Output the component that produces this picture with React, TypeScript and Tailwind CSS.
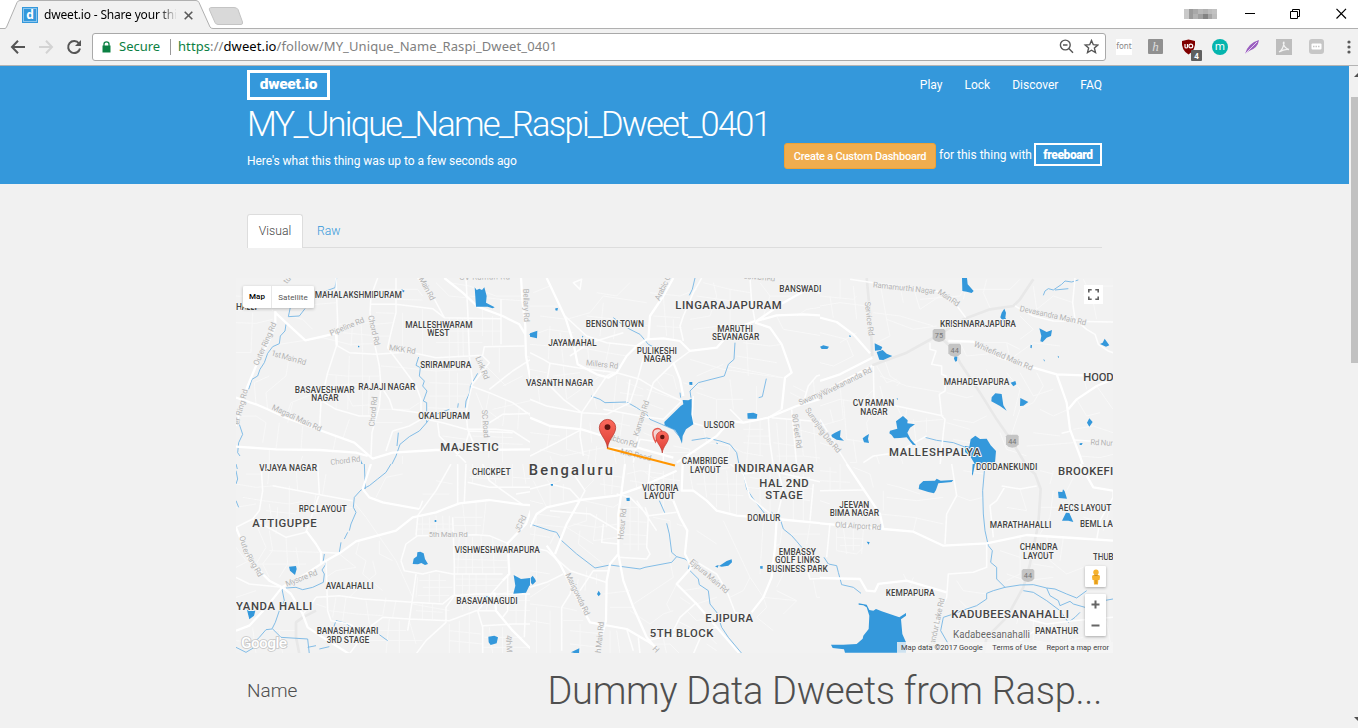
import React from "react";

type Area = [text: string, x1: number, x2: number, baseline: number, size?: number];
type Street = [text: string, x1: number, y1: number, x2: number, y2: number];
type Shield = [text: string, cx: number, cy: number];

interface Tile {
  x: number;
  y: number;
  highways?: string[];
  major: string[];
  medium: string[];
  minor: string[];
  rivers: string[];
  lakes: string[];
  streets: Street[];
  areas: Area[];
  shields?: Shield[];
}

// Tiles are drawn on a grid three times finer than the page.
const tiles: Tile[] = [
  {
    x: 236,
    y: 276,
    major: [
      "M118 105L118 150L95 205L60 270L35 330L20 372L0 450",
      "M0 365L60 385L95 400L150 425L250 462L355 500L395 535L410 548L470 530L600 522L700 522L900 520",
      "M0 512L120 520L250 522L360 530L395 540",
      "M118 110L150 140L208 193L300 172L302 208",
      "M625 6L680 50L725 92L800 120L850 145L868 175L870 240L885 320L900 350",
      "M855 6L860 80L868 150L868 175",
    ],
    medium: [
      "M425 6L405 60L402 110L415 200L430 270L435 330L430 390L408 470L405 540",
      "M300 6L302 60L305 140L302 208L340 230L420 235L520 228L600 245L740 238L745 212L865 210",
      "M302 208L275 290L255 380L250 465",
      "M480 6L480 110L465 170L455 215L500 275L540 330L555 370L555 430L520 450L470 465",
      "M405 85L480 85L590 98L625 125L795 128",
      "M545 6L590 60L625 125",
      "M690 6L695 100L700 240",
      "M705 330L760 350L830 380L900 430",
      "M700 240L710 320L700 360L690 410L695 460L720 520",
      "M570 430L620 440L690 460L780 460L830 465L900 510",
      "M745 450L800 415L900 412",
      "M605 440L610 480L650 520L690 560",
      "M435 330L460 370L470 400L550 410",
      "M795 70L795 205M740 240L760 260L705 330",
      "M660 540L690 500L700 465L830 470",
      "M250 370L300 400L370 420L420 420",
      "M470 465L450 525M900 240L830 285L760 340",
    ],
    minor: [
      "M130 205L260 185L340 205L410 203",
      "M50 110L45 230L0 230M0 140L60 142L110 130",
      "M60 50L100 70L110 105M0 60L60 62",
      "M155 100L210 100L240 85L300 80M160 120L200 130L230 160",
      "M310 145L400 140M320 170L405 178M345 210L350 140M380 230L375 140",
      "M275 295L330 300L430 300M270 330L350 325L430 330M260 360L330 350L350 390L430 385",
      "M300 300L300 400M340 240L335 400M380 235L380 420M400 300L398 415",
      "M150 425L165 380L240 350M170 380L155 440M95 400L90 350L150 300L160 240",
      "M420 110L475 112M415 145L470 140M430 180L460 180M435 270L500 275",
      "M430 40L545 40L560 60M480 70L560 72M500 110L500 220M560 100L560 235",
      "M640 125L640 240M665 125L667 240M680 125L682 240M620 165L795 165M600 200L740 200",
      "M600 20L640 60L690 65M640 20L700 30L780 60L900 60",
      "M700 60L795 70L870 75M740 100L740 180M770 120L770 208",
      "M500 275L600 285L700 280M600 260L600 420M640 245L640 400M665 290L665 380",
      "M580 320L700 325M580 360L690 360M575 395L685 400M750 270L810 330M790 215L790 290",
      "M720 350L740 400L735 460M760 350L750 400L790 430M810 370L800 450M850 390L845 460",
      "M620 480L690 490M640 500L700 505M710 480L830 485M730 500L860 505M760 460L758 545M800 465L800 560",
      "M0 420L60 420L90 440L80 500M60 385L55 320L100 300M130 440L120 520M200 450L195 522",
      "M300 480L290 530M340 430L320 490M430 400L520 400L550 380M420 440L500 440",
      "M860 300L800 330M870 240L900 250M770 400L900 370M500 540L500 570M200 540L190 570M100 520L100 570",
    ],
    rivers: [
      "M302 6L297 35L270 45L240 50",
      "M165 85L157 122L190 120L207 98",
      "M150 145L147 165L133 180L130 203L110 212L95 232L85 260L72 280L65 300L48 310L38 340",
      "M10 445L20 475L8 500L5 530L12 540",
      "M548 243L540 268L553 275L550 300L565 315L560 330L573 345L562 375L572 380L572 440L550 465L520 482L492 505L480 540L465 570",
      "M570 440L600 415L640 400M665 395L667 382M688 395L690 375L702 348L703 330L725 292",
      "M487 470L483 510",
    ],
    lakes: [
      "M716 34L722 42L730 38L738 42L745 34L752 60L750 80L776 94L770 97L755 92L720 92Z",
      "M880 175L890 168L900 165L900 188L885 182Z",
      "M497 40L506 44L503 49L496 47Z",
      "M366 209L370 210L370 214L366 214Z",
      "M375 552L382 570L377 570Z",
    ],
    streets: [
      ["Bellary Rd", 862, 38, 864, 138],
      ["Main Rd", 548, 8, 584, 75],
      ["tur", 152, 25, 172, 2],
      ["CV Raman Rd", 670, 12, 822, 10],
      ["Pipeline Rd", 285, 180, 387, 138],
      ["Chord Rd", 396, 120, 416, 210],
      ["Outer Ring Rd", 66, 270, 122, 143],
      ["1st Main Rd", 104, 238, 208, 268],
      ["MKK Rd", 458, 222, 538, 234],
      ["Link Rd", 718, 245, 745, 312],
      ["Magadi Main Rd", 106, 400, 252, 467],
      ["Chord Rd", 415, 452, 424, 362],
      ["SC Road", 737, 402, 744, 486],
      ["Chord Rd", 284, 567, 374, 556],
      ["er Ring Rd", 8, 447, 36, 342],
    ],
    areas: [
      ["MAHALAKSHMIPURAM", 236, 498, 66],
      ["HALLI", 0, 63, 103],
      ["MALLESHWARAM", 508, 710, 156],
      ["WEST", 574, 640, 180],
      ["SRIRAMPURA", 553, 706, 276],
      ["RAJAJI NAGAR", 367, 538, 342],
      ["BASAVESHWAR", 176, 356, 350],
      ["NAGAR", 226, 308, 375],
      ["OKALIPURAM", 547, 702, 430],
      ["MAJESTIC", 613, 788, 525, 34],
    ],
  },
  {
    x: 530,
    y: 276,
    major: [
      "M50 6L85 80L108 130L130 200L143 265L200 295L235 305L260 290L290 240L320 210L350 190L400 187L450 195L480 225L560 215L610 160L675 135",
      "M675 140L720 155L755 205L785 290L765 305L755 400",
      "M900 360L800 390L715 425L640 440L600 435L560 480L500 520L440 560",
      "M900 120L820 115L740 118L680 135L760 80L850 30",
      "M0 425L60 450L155 460L220 480L340 520L430 545",
      "M355 190L360 120L380 90L400 60L430 6",
      "M430 260L450 310L460 360",
    ],
    medium: [
      "M0 230L40 250L60 262L143 275L260 290L330 310L380 340L455 375",
      "M515 6L490 50L460 120L450 150L460 195",
      "M60 262L50 320L100 370L155 410L150 480L160 540",
      "M155 410L230 300L250 290M155 410L230 415L300 380L320 320L350 210",
      "M430 262L370 320L350 380L330 430L320 500L310 560",
      "M105 120L170 180L230 200L320 210",
      "M660 6L665 80L675 135M755 400L715 425L720 500L730 570",
      "M490 360L485 440L520 450M455 375L400 430L330 420L220 400",
      "M0 540L80 500L155 460M0 370L50 390L155 410",
      "M640 440L600 400M230 515L320 520L330 490L400 500L400 560",
      "M120 240L180 200L280 170M725 425L900 440M785 400L800 570",
      "M900 290L860 300L835 330L820 380M155 10L130 20L150 40L155 8",
      "M290 380L300 310M900 60L830 40L800 40M480 225L430 262",
    ],
    minor: [
      "M10 50L60 30M0 90L90 90M30 120L110 130L180 110L220 60L350 80",
      "M200 50L260 60L300 20M220 80L210 180M170 120L260 130L355 150M260 130L250 190",
      "M60 150L55 250M0 180L55 160L130 170M0 205L120 215M90 170L100 260",
      "M130 210L230 230L290 240M170 180L180 290M240 200L220 290",
      "M360 50L450 60L500 40M400 60L410 180M370 120L450 125M380 150L455 155M430 130L430 190",
      "M520 20L600 40L660 50M500 60L640 80M550 20L560 60L540 120L480 130M600 40L600 140M490 160L570 150M500 100L600 100",
      "M690 20L720 60L700 120M720 60L790 60M740 120L760 160L880 180M800 120L830 100L900 90",
      "M640 200L720 210L755 205M620 240L740 260M590 270L760 305M650 190L655 300",
      "M480 250L580 280L760 306M500 300L580 265M460 320L520 340M500 350L560 370L640 370M560 370L560 430M600 310L610 400M680 330L680 425",
      "M0 280L50 290M20 300L30 380M70 300L150 290M90 330L150 320M110 370L210 300M180 300L200 400M100 270L110 370",
      "M260 300L250 400M290 320L340 340M270 350L340 360M260 380L330 400M280 410L270 480M210 430L300 450M180 440L185 500M230 430L240 490M110 460L110 520L180 540M60 450L50 520M0 470L90 480",
      "M350 340L440 370M345 380L400 400M380 310L400 340M400 290L430 300L440 340",
      "M340 440L400 460M340 470L390 490M430 510L480 520L470 560M400 530L500 530M520 450L530 500L600 510M560 490L640 530L700 540M600 510L590 570",
      "M640 460L700 460M650 480L720 480M640 500L720 505M660 440L650 560M690 435L690 540M740 440L750 560M770 430L770 560M810 430L820 540L900 550M800 460L880 480M850 440L860 560M730 500L800 510M740 540L820 540",
      "M790 330L830 350M780 350L820 370M850 310L855 370M880 320L890 350",
      "M30 520L100 540L220 515M60 540L70 570M180 520L170 570M200 510L195 570M250 520L260 570M280 520L285 570",
    ],
    rivers: [
      "M495 6L487 40L478 58",
      "M250 125L270 140L300 160L330 175L355 205L375 215",
      "M615 200L612 250L595 265L583 300L505 320L480 345L483 365",
      "M709 308L697 362L686 365",
      "M183 360L210 370L225 380L290 378L320 395L350 415L360 430L395 445L430 460L455 490",
      "M450 350L452 365",
      "M485 493L530 486L570 495L600 505L620 530L628 570",
    ],
    lakes: [
      "M485 368L485 392L484 415L490 445L468 460L458 480L456 503L447 480L435 462L404 448L403 438L452 390L460 385L458 372L475 373Z",
      "M652 412L670 410L682 415L680 428L653 428Z",
      "M0 172L22 164L21 187L0 182Z",
      "M76 97L84 96L82 104L76 103Z",
      "M478 318L487 318L487 327L478 326Z",
      "M872 210L882 208L895 213L894 219L880 220L873 217Z",
      "M156 179L160 181L158 185Z",
      "M558 500L563 501L562 505Z",
    ],
    streets: [
      ["Arabic C", 388, 75, 423, 2],
      ["60 Main Rd", 640, 8, 735, 16],
      ["Millers Rd", 167, 268, 264, 278],
      ["Kamaraj Rd", 325, 482, 358, 376],
      ["Swamy Viv", 810, 388, 905, 348],
      ["80 Feet Rd", 786, 415, 800, 518],
      ["Suranjan Da", 824, 402, 895, 500],
      ["Cubbon Rd", 222, 487, 320, 515],
      ["MG Road", 270, 534, 362, 555],
    ],
    areas: [
      ["BANSWADI", 748, 874, 47],
      ["LINGARAJAPURAM", 436, 755, 98, 34],
      ["BENSON TOWN", 167, 342, 153],
      ["MARUTHI", 562, 669, 168],
      ["SEVANAGAR", 546, 688, 193],
      ["JAYAMAHAL", 55, 200, 210],
      ["PULIKESHI", 320, 441, 234],
      ["NAGAR", 341, 424, 258],
      ["VASANTH NAGAR", -12, 189, 329],
      ["ULSOOR", 521, 614, 455],
      ["CAMBRIDGE", 455, 594, 564],
    ],
  },
  {
    x: 820,
    y: 276,
    highways: [
      "M140 6L150 110L157 240",
      "M640 10L600 70L580 90L510 100L430 130L350 180L260 230L157 268",
      "M357 180L400 220L420 260L480 350L530 430L575 495L620 570",
    ],
    major: [
      "M0 125L50 138L100 175L150 232",
      "M157 270L80 310L0 355",
      "M0 315L60 295L157 245",
      "M385 195L460 197L540 245L640 275L710 295L790 298",
      "M710 295L740 380L750 460L780 540L790 570",
      "M879 310L830 330L770 370L745 400",
    ],
    medium: [
      "M90 10L160 20L350 45L400 75L437 125",
      "M330 200L330 220L348 225L335 265L365 270L365 295L378 300L375 345L358 355L365 420L375 430L370 470L360 570",
      "M160 270L162 370L230 390L370 420",
      "M585 90L640 120L700 135L879 138",
      "M765 6L758 80L765 130L800 160L825 175L835 205L865 225L879 230",
      "M762 492L879 500M725 472L750 466",
      "M0 430L60 530L85 570M130 560L160 540L230 530L320 480",
    ],
    minor: [
      "M0 60L100 70L110 60M0 90L60 80L140 90M30 60L40 125M100 30L110 130M60 10L60 70",
      "M180 20L200 130L280 160L350 150M240 30L250 80M280 35L300 100L360 60M300 70L420 60L430 40L570 40L600 10",
      "M430 70L440 30M500 10L490 50L510 95M160 110L240 120L340 150M200 130L210 180L170 200",
      "M0 170L80 190L100 240M60 200L110 170M0 260L40 270L100 240",
      "M190 240L210 300L240 320L230 330M170 270L200 320L230 310M180 300L260 330L370 350",
      "M0 390L60 370L120 380L162 340M60 330L70 430L0 450M70 370L80 490L150 500M180 330L190 370",
      "M170 380L140 440L145 480M230 390L245 420M260 400L255 440L370 430M280 430L290 510L360 520M320 425L320 470",
      "M380 350L440 365L460 360M420 200L440 240L540 230M450 200L560 200L600 220M560 200L570 250L640 200L720 210",
      "M600 120L640 160L600 190M640 30L650 100L700 60L760 80M800 30L879 30M820 80L830 130M790 10L800 30L790 60",
      "M500 280L520 330L560 320M560 290L600 340L580 420M600 290L640 360L700 340M650 290L670 330L640 380L600 400L570 490",
      "M790 300L800 340M830 330L879 400M770 370L800 420L840 410M745 400L700 420L660 400M760 460L820 450L879 470",
      "M620 510L700 505L760 500M640 470L720 480M500 420L460 440L400 430M380 440L450 460M400 490L450 500M540 470L560 520L620 540",
      "M780 540L840 545L879 535M30 400L40 440M100 490L110 560L90 560M0 500L30 510M170 540L180 570M240 530L250 570",
    ],
    rivers: [
      "M670 58L675 45L685 38L700 42L725 25L735 15L755 18L775 12",
      "M705 42L745 38",
      "M315 484L350 493L400 500L440 515L450 520",
    ],
    lakes: [
      "M426 6L441 6L443 25L461 45L455 51L440 47L427 45Z",
      "M553 98L558 110L556 125L566 142L550 138L541 124L545 110Z",
      "M658 157L680 168L696 162L693 180L680 185L668 198L661 196L664 180Z",
      "M854 188L868 208L858 212L840 204L848 200Z",
      "M164 202L187 213L183 222L165 224Z",
      "M170 228L188 222L200 233L217 240L190 252L178 251Z",
      "M404 240L412 242L411 255L406 257L402 248Z",
      "M526 352L545 354L550 388L560 404L540 390L514 376L515 364Z",
      "M601 366L625 378L610 389L600 390Z",
      "M572 320L586 315L589 325L580 331Z",
      "M808 427L818 438L808 452L801 440Z",
      "M249 420L263 433L262 442L285 445L270 455L262 470L272 490L288 508L278 506L260 484L240 486L222 487L215 477L208 472L210 464L232 458L228 436Z",
      "M34 477L45 470L62 462L60 483L72 494L50 491L36 483Z",
      "M147 474L144 488L147 501L132 499L128 487L137 480Z",
      "M466 479L480 489L500 488L512 508L528 525L525 560L500 572L468 570L450 540L435 528L435 510L448 512L452 490Z",
      "M0 212L10 208L27 212L22 219L5 219Z",
      "M632 206L636 208L635 217L631 215Z",
      "M713 239L717 242L715 247Z",
      "M670 250L674 252L673 257Z",
      "M779 502L788 501L785 507L779 507Z",
      "M88 178L92 179L92 183L88 182Z",
      "M230 366L234 368L232 372Z",
    ],
    streets: [
      ["Ramamurthi Nagar", 158, 34, 346, 54],
      ["Main Rd", 352, 52, 412, 92],
      ["Service Rd", 134, 78, 146, 180],
      ["Devasandra Main Rd", 598, 105, 797, 148],
      ["Whitefield Main Rd", 460, 210, 634, 284],
      ["y Vivekananda Rd", 0, 366, 158, 287],
      ["g Das Rd", -3, 468, 52, 532],
      ["Rd Nur", 811, 506, 878, 510],
    ],
    areas: [
      ["KRISHNARAJAPURA", 360, 588, 153],
      ["MAHADEVAPURA", 371, 568, 326],
      ["CV RAMAN", 98, 223, 391],
      ["NAGAR", 121, 203, 416],
      ["HOOD", 790, 881, 315, 34],
      ["MALLESHPALYA", 207, 482, 539, 34],
    ],
    shields: [
      ["75", 357, 178],
      ["44", 404, 222],
      ["44", 577, 495],
    ],
  },
  {
    x: 236,
    y: 464,
    highways: ["M240 440L200 460L180 475L180 520L190 570"],
    major: [
      "M0 500L40 485L95 425L138 370L210 330L270 290L310 268L360 232L480 200L530 160L600 145L670 118L760 108L860 122L900 124",
      "M140 370L165 390L200 450L215 490L260 520L340 570",
      "M0 190L40 290L100 350L138 370",
      "M405 0L380 75L400 100L440 115L550 135",
      "M210 200L240 240L255 265L255 300",
      "M900 95L870 180L815 238L820 330L800 350",
      "M775 385L780 440L830 500L865 535L900 570",
    ],
    medium: [
      "M240 400L310 395L380 405L530 415L620 420L650 395L720 390L900 390",
      "M270 290L275 440L285 470L340 480L370 500L380 520",
      "M495 290L505 320L560 330L600 320L650 330L800 330",
      "M545 215L510 240L495 290M545 215L720 212L760 215L815 238",
      "M545 160L540 215M650 160L655 300L655 395L630 430L630 475L570 530L540 570",
      "M540 330L530 400L520 470L515 500M340 570L400 490L440 460L520 465L640 470L720 440L780 440",
      "M800 350L770 385L725 440L740 490L740 570M740 485L830 480L900 480",
      "M645 0L600 80L545 155M665 0L665 120M690 0L685 115M110 65L240 90L350 110",
      "M75 0L80 80L70 140L50 165L0 190M50 165L150 220L210 205L250 90L245 0",
      "M240 400L220 430L200 450M815 330L815 440L800 460M870 390L865 520",
      "M255 265L310 268M740 0L760 50L800 80L860 122M0 340L40 360L140 370",
      "M695 55L760 70L900 70M840 90L900 80M550 135L560 110",
    ],
    minor: [
      "M0 60L60 70L120 65M20 100L80 110L160 120L210 110M160 65L160 200M100 120L110 190",
      "M90 140L180 150M90 180L200 185M125 130L120 210M0 130L60 120M30 30L80 30M100 10L95 60M180 0L185 80M270 30L260 90",
      "M60 180L90 250L60 300M100 200L110 260L80 300L100 340M150 220L155 300L130 340M180 250L190 310M100 260L250 265M60 300L210 300",
      "M0 250L30 290M0 400L60 380M40 290L0 310M240 90L230 150L350 130M350 110L390 160L480 290L530 400",
      "M370 230L360 270L390 290L380 330L440 380M430 230L430 270L470 290M310 270L360 310L300 320L270 340M410 290L420 330L360 380L340 400",
      "M560 160L560 212M580 160L582 212M600 155L602 212M620 155L622 212M640 155L640 212M545 180L650 180M545 195L650 195",
      "M680 120L690 210M720 115L720 210M750 115L740 210M655 160L740 160M655 185L735 185",
      "M670 212L665 330M690 212L690 330M710 220L710 330M735 212L740 330M770 220L775 330M655 260L810 265M655 285L815 290M655 310L815 310",
      "M660 345L800 345M660 365L790 365M680 330L680 390M700 330L700 390M720 330L720 390M750 330L750 385M790 390L890 365M840 330L850 390",
      "M680 395L680 440M700 395L700 440M820 410L900 410M820 440L900 440M840 395L840 480M890 395L890 530M760 400L750 440",
      "M545 340L540 400M580 330L580 415M610 330L610 415M560 370L650 370M545 395L640 395M550 350L630 350",
      "M530 420L640 440M540 440L620 445M560 420L560 465M590 420L590 465M450 400L440 455M480 410L470 460M390 410L400 480M330 400L320 470",
      "M300 400L290 460M240 420L270 430M280 440L360 450L440 455M460 465L450 570M490 470L490 570M400 500L510 500M390 530L560 530M520 470L540 540M640 480L640 570M670 470L670 570M700 450L700 570",
      "M640 500L735 510M640 530L740 540M760 490L770 570M800 490L800 570M745 520L860 520M740 550L880 550",
      "M700 20L760 20M700 40L800 45M710 0L710 60M770 0L780 60M830 0L830 70M860 0L870 60M560 90L640 90M600 50L650 60M420 100L450 40L500 30M830 40L900 45",
      "M50 490L60 570M100 500L180 500M130 500L140 570M0 530L90 540",
    ],
    rivers: [
      "M465 0L450 25L425 45L400 65L375 78L355 100L352 130L360 145L345 180L340 200M335 205L325 225M315 235L310 265",
      "M385 0L388 75",
      "M0 20L5 45L0 60M0 110L8 130M0 0L4 15",
      "M265 270L262 290L270 300L258 318L265 330L262 355L230 370L200 377L180 370L150 372",
      "M138 375L145 410L130 440L118 475L108 495L90 497",
      "M90 497L70 520L50 540L55 550L30 565L0 550M110 495L135 520L215 525L220 570",
      "M293 490L300 470L330 478L345 490M430 512L455 530M215 550L240 545M250 555L280 548",
      "M882 180L900 184",
    ],
    lakes: [
      "M553 263L563 268L567 285L576 300L567 303L556 297L546 301L530 300L533 284L543 277L544 265Z",
      "M159 308L180 306L182 315L177 333L162 320Z",
      "M33 437L58 440L54 455L40 466L36 450Z",
      "M833 333L855 345L898 340L900 358L880 365L870 386L832 389L838 365Z",
      "M757 518L775 515L786 520L782 538L764 543L758 535Z",
      "M596 168L601 168L601 174L596 174Z",
      "M750 396L758 396L757 403L750 402Z",
    ],
    streets: [
      ["Outer", 10, 218, 26, 275],
      ["Ring Rd", 30, 276, 68, 340],
      ["Mysore Rd", 152, 368, 246, 332],
      ["5th Main Rd", 578, 220, 695, 220],
      ["JC Rd", 850, 207, 872, 158],
      ["4th M", 810, 514, 812, 566],
    ],
    areas: [
      ["VIJAYA NAGAR", 70, 243, 21],
      ["CHICKPET", 708, 824, 34],
      ["RPC LAYOUT", 188, 332, 144],
      ["ATTIGUPPE", 49, 242, 189, 34],
      ["AVALAHALLI", 269, 413, 374],
      ["YANDA HALLI", 0, 229, 439, 34],
      ["BASAVANAGUDI", 661, 845, 421],
      ["BANASHANKARI", 242, 427, 511],
      ["3RD STAGE", 272, 400, 536],
    ],
  },
  {
    x: 530,
    y: 464,
    major: [
      "M0 190L20 150L50 130L150 108L260 95L330 70L440 20",
      "M285 0L275 80L265 150L265 270L240 300L230 350L228 470L200 570",
      "M265 270L280 350L310 430L350 520L380 555",
      "M430 110L450 160L472 200L465 270L485 310L440 360L500 420L560 490L630 570",
      "M458 0L455 80L490 80L530 110L560 140L620 155L740 165L900 180",
      "M740 165L735 250L725 340L700 400L665 445",
      "M50 245L90 300L130 380L155 430L180 475L290 495L350 530L380 550",
      "M150 108L110 180L75 270",
    ],
    medium: [
      "M0 75L60 60L120 75L150 108L165 80L110 0",
      "M0 250L50 260L120 320L228 355M60 140L180 150L265 200",
      "M100 330L50 355L0 370M130 350L120 390L95 430L95 560",
      "M345 130L355 155L440 145M355 155L350 250L360 270L350 285L265 280",
      "M220 180L215 235L265 240M320 110L380 200M260 90L300 100L355 155",
      "M640 30L660 100L740 165M600 0L640 30L720 20L900 60",
      "M740 0L760 80L740 165M850 60L840 170M485 285L560 330L590 380L615 445L665 460",
      "M500 415L450 460L430 500M560 490L520 500L490 570M480 500L350 530",
      "M720 300L830 310L840 345L900 342M150 380L190 320L235 320",
      "M290 495L310 560M325 520L330 570M360 0L355 60",
    ],
    minor: [
      "M0 20L60 40M20 0L60 60L60 130M80 0L90 50L60 60M120 20L180 30L200 0M180 0L190 50L160 80M100 60L100 110M0 110L40 120M10 50L50 130",
      "M200 30L280 40M210 60L275 70M220 20L225 95M250 0L245 90M290 30L330 20L400 30M310 0L320 70M340 20L390 60M300 50L360 60",
      "M20 150L90 160M10 180L110 190L170 170M130 180L200 190L265 180M200 150L190 230L265 220M110 190L190 240M150 200L145 240L220 300M160 110L250 130L265 120",
      "M170 130L170 170M230 130L230 190M80 200L60 240M0 210L60 220M20 160L10 240M280 130L340 130M280 170L350 175M280 210L350 215M300 110L300 260M325 120L325 260M280 240L350 240",
      "M370 40L450 50M380 70L450 75M400 20L400 150M430 20L430 110M360 100L430 110M370 160L420 170L420 280M440 180L470 190",
      "M490 85L480 30L600 10M520 20L530 100M560 30L560 130M590 20L600 150M500 60L640 60M540 90L640 95M620 30L620 150",
      "M660 40L720 50M650 70L750 80M690 20L690 130M720 20L720 150M760 40L840 40M770 70L850 75M760 100L840 110M790 20L790 170M820 30L820 170",
      "M580 170L660 340L640 380L600 400M700 170L690 330M500 200L560 240M440 360L410 420L420 440M420 290L430 340L310 420",
      "M660 340L700 400L800 410L760 450M700 400L710 430L680 460L730 500M740 380L800 410M300 440L360 480L400 450L430 440",
      "M500 420L560 400M460 380L520 370M470 440L500 470L550 460M480 420L450 400M440 470L500 500M520 500L560 540",
      "M150 330L200 345M145 345L140 370M170 320L165 380M200 330L200 360M95 430L140 440M100 470L160 470M60 440L60 570M0 420L90 430M0 470L60 480M20 430L20 570M120 500L220 510M120 540L210 550M150 480L150 570M240 500L240 570M260 500L270 570M0 400L60 360M0 320L60 330M20 260L20 350",
      "M760 170L750 240L730 250M840 180L830 240M780 210L900 210M880 180L870 260M760 330L740 370M850 350L860 400L900 400",
      "M360 540L420 540L450 570M395 500L410 570M530 540L560 560M300 380L220 390M310 430L240 430",
    ],
    rivers: [
      "M0 180L60 200L80 205L95 230L140 270L195 312L240 303L330 315L345 310L425 295L440 278L465 285L480 295L475 315L505 345L508 362L535 380L540 420L560 445L575 490L595 520L635 568",
      "M388 110L404 146M410 178L418 210L425 265L440 278",
      "M640 25L650 75L670 105L705 150M753 172L760 195L785 215L800 232L817 252L820 262",
      "M730 150L725 145M870 275L885 285L900 300",
    ],
    lakes: [
      "M572 303L590 291L605 286L606 295L595 305L575 308L567 306Z",
      "M555 307L566 303L563 311Z",
      "M289 102L299 101L299 111L290 111Z",
      "M2 342L8 335L15 345L18 352L8 362L3 357Z",
      "M206 380L212 390L206 397L201 390Z",
      "M690 307L698 306L698 314L691 314Z",
      "M123 565L148 553L147 570Z",
      "M62 60L69 60L69 65L63 65Z",
    ],
    streets: [
      ["Hosur Rd", 280, 228, 289, 134],
      ["Marigowda Rd", 106, 332, 166, 456],
      ["Ejipura Main Rd", 478, 296, 588, 390],
      ["h Main Rd", 212, 568, 222, 474],
      ["H", 366, 556, 378, 568],
    ],
    areas: [
      ["Bengaluru", -4, 249, 32, 44],
      ["LAYOUT", 480, 572, 26],
      ["INDIRANAGAR", 613, 852, 25, 34],
      ["HAL 2ND", 688, 836, 70, 34],
      ["STAGE", 706, 818, 104, 34],
      ["VICTORIA", 336, 445, 80],
      ["LAYOUT", 343, 435, 105],
      ["DOMLUR", 652, 751, 170],
      ["VISHWESHWARAPURA", -226, 30, 267],
      ["EMBASSY", 746, 858, 273],
      ["GOLF LINKS", 735, 870, 298],
      ["BUSINESS PARK", 710, 894, 323],
      ["EJIPURA", 526, 669, 475, 34],
      ["5TH BLOCK", 359, 550, 519, 34],
    ],
  },
  {
    x: 820,
    y: 464,
    highways: ["M610 0L645 30L662 75L655 180L630 300L610 370L560 460L500 520L490 570"],
    major: [
      "M0 178L190 195L280 203L370 245L500 238L620 213L760 222L879 230",
      "M80 0L130 75L180 150L190 195",
      "M780 0L820 70L879 80",
      "M0 342L120 345L140 380L165 382L175 360L260 350L380 385",
    ],
    medium: [
      "M395 0L410 95L380 150L375 240",
      "M500 238L500 310L460 325L385 330L380 400L360 440L330 570",
      "M555 68L530 110L510 125L520 220",
      "M545 66L600 75L650 66M879 80L879 100L840 170L830 228",
      "M600 460L680 480L760 470L879 460M600 530L660 490",
      "M30 178L20 280M0 80L130 78",
    ],
    minor: [
      "M0 20L50 25M0 50L90 55M60 0L60 75M30 10L30 80M100 10L150 30L160 70M0 110L30 120",
      "M50 195L50 260L110 270L130 250M70 190L80 270M100 190L100 260M130 195L125 270M50 220L130 225M60 245L120 245",
      "M200 60L240 70L300 90M180 150L280 160L370 180M280 203L290 160M190 80L190 140M200 100L290 110L370 100",
      "M430 20L490 30M410 95L450 110L490 100M600 75L620 140L560 130M700 80L690 160L660 210M760 40L740 80M660 130L720 130L760 150",
      "M680 215L690 290L740 330L790 310M730 220L720 290M600 220L600 330L560 350M640 300L700 310M540 260L600 280M560 330L620 350L700 340",
      "M250 330L260 350M280 340L270 370L340 380M60 345L70 370M420 410L440 430L460 430M410 350L430 380L500 390",
      "M640 460L640 530L700 540L790 520M700 480L700 530M740 470L750 560M680 560L760 550M860 470L875 560M600 440L590 480",
      "M850 200L870 130M790 160L830 170M800 40L850 20L879 30M700 20L690 60M660 20L700 30",
    ],
    rivers: [
      "M495 0L488 80L490 150L495 200L505 245L517 260L512 295L530 310L530 345L555 370L600 363L640 362L680 372L705 375L740 390L770 402L800 380",
      "M555 370L520 380L500 388L500 405L470 425L440 435L400 450L370 460L362 500L385 540",
      "M610 380L640 385L680 410L720 440L745 475L765 460L780 445",
      "M680 372L690 395L715 410L720 425L750 412L760 420L795 430L840 412L879 405",
      "M12 280L25 300L50 305L55 325L65 362L100 370L123 388",
    ],
    lakes: [
      "M456 30L458 0L465 0L458 35Z",
      "M298 62L310 51L345 50L350 44L362 50L400 48L395 54L355 58L348 78L342 88L325 84L296 75Z",
      "M714 83L727 84L729 76L734 82L741 104L716 102Z",
      "M738 146L748 147L760 174L745 170L726 170Z",
      "M140 233L149 234L146 242Z",
      "M116 418L140 422L148 438L160 440L168 435L185 442L238 460L258 447L258 455L243 466L247 510L258 535L258 566L75 566L72 556L38 552L33 542L70 542L110 540L128 524L130 515L146 495L148 455L140 430L130 424L116 422Z",
    ],
    streets: [
      ["Old Airport Rd", 45, 190, 183, 198],
      ["llandur Lake Rd", 342, 552, 374, 404],
    ],
    areas: [
      ["DODDANEKUNDI", 468, 652, 19],
      ["BROOKEFI", 714, 880, 33, 34],
      ["JEEVAN", 58, 148, 131],
      ["BIMA NAGAR", 29, 177, 156],
      ["AECS LAYOUT", 715, 874, 142],
      ["BEML LA", 780, 879, 188],
      ["MARATHAHALLI", 509, 694, 191],
      ["CHANDRA", 599, 713, 259],
      ["LAYOUT", 609, 701, 284],
      ["THUB", 819, 881, 288],
      ["KEMPAPURA", 197, 344, 396],
      ["KADUBEESANAHALLI", 394, 747, 463, 34],
      ["PANATHUR", 645, 775, 511],
    ],
    shields: [["44", 624, 334]],
  },
];

const at = (t: Tile) => `translate(${t.x} ${t.y}) scale(0.33333)`;

function TileBase({ tile, index }: { tile: Tile; index: number }) {
  return (
    <g transform={at(tile)} clipPath={`url(#tile${index})`}>
      <clipPath id={`tile${index}`}>
        <rect x="0" y="0" width={tile.x === 530 ? 870 : tile.x === 236 ? 882 : 900} height={tile.y === 276 ? 564 : 570} />
      </clipPath>
      <g fill="none" strokeLinejoin="round">
        <path d={tile.minor.join("")} stroke="#f8f8f8" strokeWidth="2.7" />
        <path d={(tile.highways ?? []).join("")} stroke="#e8e8e8" strokeWidth="8" />
        <path d={tile.rivers.join("")} stroke="#7ab8e5" strokeWidth="2.8" />
        <path d={tile.medium.join("")} stroke="#fdfdfd" strokeWidth="4.6" />
        <path d={tile.major.join("")} stroke="#fff" strokeWidth="6.8" />
      </g>
      <path d={tile.lakes.join("")} fill="#3498db" />
    </g>
  );
}

function TileLabels({ tile }: { tile: Tile }) {
  return (
    <g transform={at(tile)} strokeLinejoin="round">
      {tile.streets.map(([text, x1, y1, x2, y2], i) => (
        <text
          key={i}
          transform={`translate(${x1} ${y1}) rotate(${(Math.atan2(y2 - y1, x2 - x1) * 180) / Math.PI})`}
          textLength={Math.hypot(x2 - x1, y2 - y1)}
          fontSize="24"
          fill="#b3b3b3"
          stroke="#f4f4f4"
          strokeWidth="4"
          style={{ paintOrder: "stroke" }}
        >
          {text}
        </text>
      ))}
      {(tile.shields ?? []).map(([text, cx, cy], i) => (
        <g key={i} transform={`translate(${cx} ${cy})`}>
          <path d="M-15 -19H15L19 -14V10L12 17L0 20L-12 17L-19 10V-14Z" fill="#c4c4c4" />
          <text y="8" fontSize="22" fill="#777" textAnchor="middle">{text}</text>
        </g>
      ))}
      {tile.areas.map(([text, x1, x2, baseline, size = 25.5], i) => (
        <text
          key={i}
          x={x1}
          y={baseline}
          textLength={x2 - x1}
          fontSize={size}
          fontWeight="500"
          fill="#444"
          stroke="#f5f5f5"
          strokeWidth="6"
          style={{ paintOrder: "stroke" }}
        >
          {text}
        </text>
      ))}
    </g>
  );
}

function Pin({ x, y, scale }: { x: number; y: number; scale: number }) {
  return (
    <g transform={`translate(${x} ${y}) scale(${scale})`}>
      <path d="M0 0C-1 -9 -8 -13 -8 -20A8 8 0 0 1 8 -20C8 -13 1 -9 0 0Z" fill="url(#pin)" stroke="#b93a30" strokeWidth="0.8" />
      <circle cy="-20.5" r="2.9" fill="#5c1410" />
    </g>
  );
}

function CityMap() {
  return (
    <div className="relative -ml-[11px] mt-[30px] h-[375px] w-[877px] overflow-hidden bg-[#f2f2f2]">
      <svg width="877" height="375" viewBox="236 278 877 375" fontFamily='Roboto, "Liberation Sans", sans-serif'>
        <defs>
          <linearGradient id="pin" x1="0" y1="0" x2="0" y2="1">
            <stop offset="0" stopColor="#fb6a5d" />
            <stop offset="1" stopColor="#dd3f36" />
          </linearGradient>
        </defs>
        {tiles.map((t, i) => <TileBase key={i} tile={t} index={i} />)}
        {tiles.map((t, i) => <TileLabels key={i} tile={t} />)}
        <text x="953" y="637.5" textLength="77" fontSize="10" fill="#666" stroke="#f5f5f5" strokeWidth="2" style={{ paintOrder: "stroke" }}>
          Kadabeesanahalli
        </text>
        <path d="M607 448L675 465.5" stroke="#ff9500" strokeWidth="2.2" />
        <g transform="translate(657.5 442) scale(0.65)">
          <path d="M-3 0C-5 -4 -7 -8 -7 -12A7 7 0 0 1 7 -15L3 -12Z" fill="#f4d6d3" stroke="#e5594f" strokeWidth="2.2" />
        </g>
        <Pin x={607.5} y={448} scale={1.02} />
        <Pin x={662.3} y={453} scale={0.78} />
        <text x="241" y="647.5" textLength="46" fontSize="15.5" fontWeight="500" fill="#fff" stroke="#c6c6c6" strokeWidth="1.6" style={{ paintOrder: "stroke" }}>
          Google
        </text>
      </svg>
      <div className="absolute left-[7px] top-[8px] flex h-[22px] text-[8px] leading-[21px] shadow-[0_1px_3px_rgba(0,0,0,0.25)]">
        <span className="w-[28px] rounded-l-[2px] bg-white text-center font-medium text-black">Map</span>
        <span className="w-[43px] rounded-r-[2px] border-l border-[#e8e8e8] bg-white pt-px text-center tracking-[0.12px] text-[#565656]">Satellite</span>
      </div>
      <div className="absolute left-[848px] top-[7px] flex h-[19px] w-[19px] items-center justify-center bg-white">
        <svg width="11" height="11" viewBox="0 0 11 11" fill="none" stroke="#5f5f5f" strokeWidth="1.6">
          <path d="M0.8 3.5V0.8H3.7M7.3 0.8H10.2V3.5M10.2 7.5V10.2H7.3M3.7 10.2H0.8V7.5" />
        </svg>
      </div>
      <div className="absolute left-[849px] top-[288px] flex h-[21px] w-[21px] items-center justify-center rounded-[1px] bg-white shadow-[0_1px_3px_rgba(0,0,0,0.3)]">
        <svg width="10" height="16" viewBox="0 0 10 16">
          <path d="M2 6H8Q9 6.500 9 8L8.500 11H7.300L7 15.500H3L2.700 11H1.500L1 8Q1 6.500 2 6Z" fill="#f6b22d" />
          <circle cx="5" cy="3.200" r="2.700" fill="#f6b22d" />
          <path d="M3 5.900Q5 7.200 7 5.900M5 11V15" stroke="#c98413" strokeWidth="0.9" fill="none" />
        </svg>
      </div>
      <div className="absolute left-[849px] top-[316px] flex h-[42px] w-[21px] flex-col items-center justify-around rounded-[1px] bg-white shadow-[0_1px_3px_rgba(0,0,0,0.3)]">
        <svg width="9" height="9" viewBox="0 0 9 9" stroke="#666" strokeWidth="2"><path d="M0.500 4.500H8.500M4.500 0.500V8.500" /></svg>
        <svg width="9" height="9" viewBox="0 0 9 9" stroke="#666" strokeWidth="2"><path d="M0.500 4.500H8.500" /></svg>
      </div>
      <div className="absolute bottom-0 right-0 flex h-[11px] w-[216px] justify-between bg-[#f5f5f5]/80 pl-[4px] pr-[4px] text-[7.5px] leading-[11px] text-[#3c3c3c]">
        <span>Map data ©2017 Google</span>
        <span>Terms of Use</span>
        <span>Report a map error</span>
      </div>
    </div>
  );
}

const blob = [
  "bg-[#c9c9c9]", "bg-[#9b9b9b]", "bg-[#a9a9a9]", "bg-[#b8b8b8]", "bg-[#b0b0b0]", "bg-[#bcbcbc]", "bg-[#c2c2c2]",
  "bg-[#c9c9c9]", "bg-[#9b9b9b]", "bg-[#b2b2b2]", "bg-[#a0a0a0]", "bg-[#838383]", "bg-[#a5a5a5]", "bg-[#bdbdbd]",
];

function BrowserChrome() {
  return (
    <div className="h-[66px] font-['Noto_Sans','Open_Sans',sans-serif]">
      <div className="relative flex h-[28px] justify-between bg-white">
        <svg className="absolute left-0 top-0" width="1358" height="29" viewBox="0 0 1358 29">
          <path d="M0 28.500H5Q6.500 28 7 26L17 2.500Q18 0.500 20 0.500H196Q198 0.500 199 2.500L210 27Q211 28.500 213 28.500H1358" fill="#f1f1f1" stroke="#b0b0b0" />
          <path d="M212 7.500H234Q237 7.500 238 9.500L242.500 22Q243 24.500 241 24.500H218Q216 24.500 215 22.500L209.500 10Q208.500 7.500 212 7.500Z" fill="#d9d9d9" stroke="#c4c4c4" />
        </svg>
        <div className="relative flex items-center pl-[22px] pt-[2px]">
          <span className="flex h-4 w-4 items-center justify-center border border-[#3498db] bg-[#3498db] pb-px text-[12px] font-bold leading-none text-white outline-1 -outline-offset-2 outline-[#8cc6ee]">d</span>
          <span className="ml-[6px] w-[132px] overflow-hidden whitespace-nowrap bg-gradient-to-r from-black from-85% to-[#e6e6e6] bg-clip-text text-[12px] tracking-[-0.18px] text-transparent">dweet.io - Share your thi</span>
          <svg className="ml-[8px]" width="9" height="9" viewBox="0 0 9 9" stroke="#5a5a5a" strokeWidth="1.6"><path d="M0.700 0.700L8.300 8.300M8.300 0.700L0.700 8.300" /></svg>
        </div>
        <div className="relative flex items-center pr-[11px]">
          <div className="mr-[28px] grid w-[33px] grid-cols-7">
            {blob.map((c, i) => <span key={i} className={`h-[5px] ${c}`} />)}
          </div>
          <svg width="102" height="12" viewBox="0 0 102 12" fill="none" stroke="#000">
            <path d="M0 5.500H10M45.500 3.500H52.500V10.500H45.500ZM47.500 3.500V1.500H54.500V8.500H52.500" />
            <path d="M91.500 0.800L101 10.500M101 0.800L91.500 10.500" strokeWidth="1.200" />
          </svg>
        </div>
      </div>
      <div className="flex h-[38px] items-center border-b border-[#b4b4b4] bg-[#f1f1f1]">
        <svg className="ml-[10px] shrink-0" width="72" height="16" viewBox="0 0 72 16" fill="none" strokeWidth="2">
          <path d="M15 8H2.500M8 1.800L2 8L8 14.200" stroke="#555" />
          <path d="M29 8H41.500M36 1.800L42 8L36 14.200" stroke="#d3d3d3" />
          <path d="M69 4.500A6 6 0 1 0 70 9.500" stroke="#555" />
          <path d="M71 1V7H65Z" fill="#555" />
        </svg>
        <div className="ml-[10px] flex h-[28px] w-[1014px] shrink-0 items-center rounded-[3px] border border-[#a9a9a9] bg-white text-[14px]">
          <svg className="ml-[9px]" width="9" height="12" viewBox="0 0 9 12"><path d="M0.500 4.500H8.500V11.500H0.500Z" fill="#0b8043" /><path d="M2 5V3Q2 0.800 4.500 0.800Q7 0.800 7 3V5" fill="none" stroke="#0b8043" strokeWidth="1.300" /></svg>
          <span className="ml-[8px] w-[41px] text-[13px] text-[#0b8043]">Secure</span>
          <span className="ml-[10px] h-[16px] w-px bg-[#999]" />
          <span className="ml-[7px] whitespace-nowrap text-[13px] tracking-[0.09px] text-[#808080]"><span className="text-[#0b8043]">https</span>://<span className="text-black">dweet.io</span>/follow/MY_Unique_Name_Raspi_Dweet_0401</span>
          <svg className="ml-auto mr-[6px]" width="40" height="15" viewBox="0 0 40 15" fill="none" stroke="#555" strokeWidth="1.400">
            <circle cx="6.300" cy="6" r="4.900" /><path d="M9.800 9.500L14 13.800M4 6H8.500" />
            <path d="M32.500 1.500L34.300 5.700L38.800 6.100L35.400 9.100L36.500 13.500L32.500 11.200L28.500 13.500L29.600 9.100L26.200 6.100L30.700 5.700Z" />
          </svg>
        </div>
        <div className="ml-[10px] flex h-full flex-1 items-center">
          <span className="flex h-4 w-4 items-center justify-center bg-white pb-[2px] text-[8px] text-[#888]">font</span>
          <span className="ml-4 flex h-[15px] w-[15px] items-center justify-center rounded-[1px] bg-[#909090] font-['Liberation_Serif',serif] text-[13px] italic text-[#ddd]">h</span>
          <span className="relative ml-[18px] h-[15px] w-[15px]">
            <svg width="15" height="16" viewBox="0 0 15 16"><path d="M7.500 0.500L14 2Q15 11 7.500 15.500Q0 11 1 2Z" fill="#800000" /><path d="M4 5V8Q4 9 5.200 9Q6.500 9 6.500 8V5" fill="none" stroke="#fff" strokeWidth="1.200" /><circle cx="9.800" cy="7" r="1.900" fill="none" stroke="#fff" strokeWidth="1.200" /></svg>
            <span className="absolute left-[10px] top-[11px] h-[11px] w-[11px] rounded-[1px] bg-[#606060] text-center text-[8px] font-bold leading-[11px] text-white">4</span>
          </span>
          <span className="ml-4 flex h-4 w-4 items-center justify-center rounded-full bg-[#05b5ae] pb-[2px] text-[11px] leading-none text-white">m</span>
          <svg className="ml-4" width="16" height="16" viewBox="0 0 16 16"><path d="M1 15Q4 4 15 1Q14 9 5 12Z" fill="#9b5fc0" /><path d="M1 15L13 3" stroke="#ead9f5" strokeWidth="0.900" /></svg>
          <svg className="ml-4" width="16" height="16" viewBox="0 0 16 16"><path d="M0 0H16V16H0Z" fill="#bdbdbd" /><path d="M3 13Q7 11 8 4Q8 2.500 7.300 4Q8 9 13 10.500Q9 9.500 3 13Z" fill="none" stroke="#f3f3f3" strokeWidth="1.300" /></svg>
          <svg className="ml-[17px]" width="15" height="15" viewBox="0 0 15 15"><rect width="15" height="15" rx="3" fill="#c6c6c6" /><rect x="2.500" y="4.500" width="10" height="6" rx="1" fill="#fff" /><path d="M4 7.500H11" stroke="#c6c6c6" strokeDasharray="1.500 1" strokeWidth="1.500" /></svg>
          <svg className="ml-[23px]" width="4" height="14" viewBox="0 0 4 14" fill="#5a5a5a"><circle cx="2" cy="2" r="1.600" /><circle cx="2" cy="7" r="1.600" /><circle cx="2" cy="12" r="1.600" /></svg>
        </div>
      </div>
    </div>
  );
}

function Header() {
  return (
    <header className="h-[118px] bg-[#3498db] pl-[247px] pt-[4px] text-white">
      <div className="flex w-[855px] justify-between">
        <div className="flex h-[30px] w-[83px] items-center justify-center border-3 border-white text-[15.5px] font-black tracking-[-0.3px]">dweet.io</div>
        <nav className="flex gap-[22px] pt-[5px] text-[12px] leading-[20px]">
          <a>Play</a><a>Lock</a><a>Discover</a><a>FAQ</a>
        </nav>
      </div>
      <h1 className="mt-[4px] h-[40px] whitespace-nowrap text-[34.5px] font-light leading-[40px] tracking-[-1.78px]">MY_Unique_Name_Raspi_Dweet_0401</h1>
      <div className="flex h-[32px] w-[855px] justify-between">
        <p className="pt-[7px] text-[12px] leading-[20px] tracking-[-0.05px]">Here's what this thing was up to a few seconds ago</p>
        <div className="flex items-start whitespace-nowrap">
          <button className="-mt-px h-[26px] w-[152px] rounded-[3px] border border-[#eea236] bg-[#f0ad4e] text-[11px] font-medium leading-[23px] tracking-[-0.22px]">Create a Custom Dashboard</button>
          <span className="ml-[3px] w-[95px] text-[12px] leading-[22px]">for this thing with</span>
          <span className="-mt-px flex h-[23px] w-[68px] items-center justify-center border-2 border-white text-[12px] font-black tracking-[-0.4px]">freeboard</span>
        </div>
      </div>
    </header>
  );
}

export default function App() {
  return (
    <div className="h-[728px] w-[1358px] overflow-hidden bg-[#f1f1f1] font-[Roboto,'Liberation_Sans',sans-serif]">
      <BrowserChrome />
      <div className="flex h-[662px]">
        <div className="w-[1349px] shrink-0">
          <Header />
          <main className="ml-[247px] w-[855px]">
            <div className="mt-[30px] flex h-[34px] border-b border-[#ddd] text-[12.200px] font-light">
              <span className="h-[34px] w-[56px] rounded-t-[3px] border border-b-0 border-[#ddd] bg-white text-center leading-[32px] text-[#444]">Visual</span>
              <span className="ml-[14px] leading-[34px] text-[#3498db]">Raw</span>
            </div>
            <CityMap />
            <div className="flex h-[76px] items-center justify-between pt-px font-light text-[#4f4f4f]">
              <span className="text-[19px]">Name</span>
              <span className="whitespace-nowrap text-[38px] tracking-[-0.27px]">Dummy Data Dweets from Rasp...</span>
            </div>
          </main>
        </div>
        <div className="flex flex-1 flex-col justify-between pl-[2px]">
          <div>
            <svg className="ml-[3px] mt-[7px]" width="4" height="4" viewBox="0 0 4 4"><path d="M0 4L4 0V4Z" fill="#505050" /></svg>
            <div className="mt-[20px] h-[266px] w-[7px] bg-[#c1c1c1]" />
          </div>
          <svg className="mb-[7px] ml-[3px]" width="4" height="4" viewBox="0 0 4 4"><path d="M0 0H4V4Z" fill="#505050" /></svg>
        </div>
      </div>
    </div>
  );
}
